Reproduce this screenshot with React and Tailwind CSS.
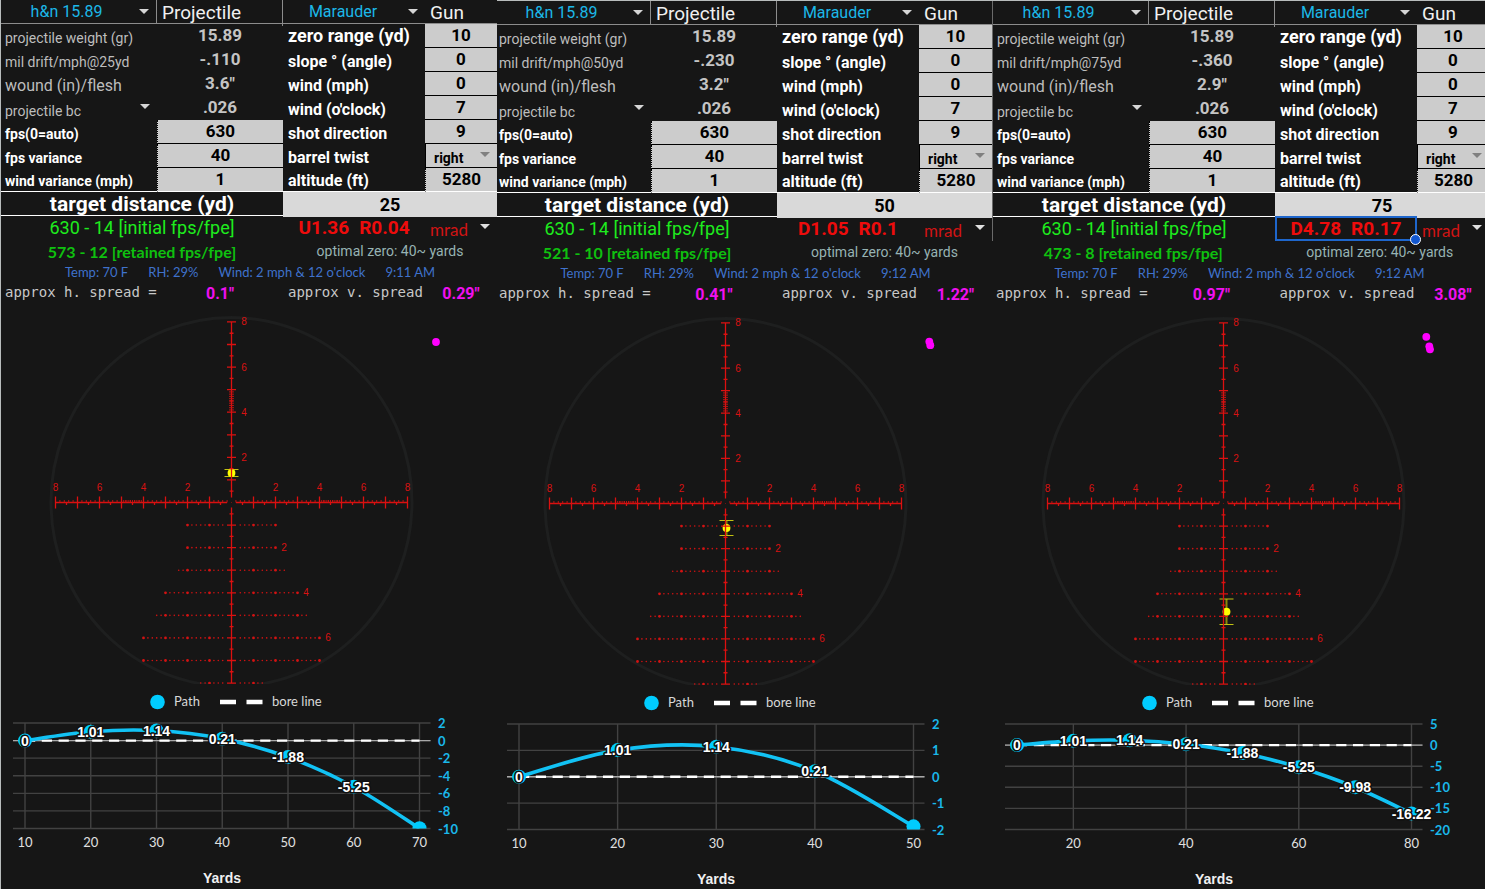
import React, { useId } from "react";

const PANELS = [
  {
    id: "d25",
    frame: "border-l border-[#b8bcbc]",
    table: "",
    cols: "grid-cols-[156fr_126fr_142fr_72fr]",
    half: "grid-cols-[282fr_214fr]",
    holdCols: "grid-cols-[142fr_72fr]",
    labelPad: "pl-1",
    fieldPad: "",
    arrowRight: "right-[7px]",
    viewX: 1,
    viewW: 496,
    distance: "25",
    drift: "-.110",
    wound: '3.6"',
    retained: "573 - 12 [retained fps/fpe]",
    holds: ["U1.36", "R0.04"],
    time: "9:11 AM",
    hSpread: '0.1"',
    vSpread: '0.29"',
    impact: { x: 231.5, y: 473, top: 469.5, bottom: 476.5 },
    hits: [[436, 342]],
    chart: { top: 2, bottom: -10, step: 2, xMax: 70, xTicks: [10, 20, 30, 40, 50, 60, 70], last: false },
  },
  {
    id: "d50",
    frame: "border-t border-[#b8bcbc]",
    table: "",
    cols: "grid-cols-[154fr_126fr_142fr_73fr]",
    half: "grid-cols-[280fr_215fr]",
    holdCols: "grid-cols-[142fr_73fr]",
    labelPad: "pl-0.5",
    fieldPad: "",
    arrowRight: "right-[7px]",
    viewX: 3,
    viewW: 495,
    distance: "50",
    drift: "-.230",
    wound: '3.2"',
    retained: "521 - 10 [retained fps/fpe]",
    holds: ["D1.05", "R0.1"],
    time: "9:12 AM",
    hSpread: '0.41"',
    vSpread: '1.22"',
    impact: { x: 232.5, y: 527, top: 519.5, bottom: 534.5 },
    hits: [[435.3, 340.6], [436.3, 344.2]],
    chart: { top: 2, bottom: -2, step: 1, xMax: 50, xTicks: [10, 20, 30, 40, 50], last: false },
  },
  {
    id: "d75",
    frame: "border-t border-[#b8bcbc]",
    table: "border-l border-[#6a6a6a]",
    cols: "grid-cols-[156fr_126fr_142fr_68fr]",
    half: "grid-cols-[282fr_210fr]",
    holdCols: "grid-cols-[142fr_68fr]",
    labelPad: "pl-1",
    fieldPad: "pl-1",
    arrowRight: "right-[3px]",
    viewX: 0,
    viewW: 493,
    distance: "75",
    drift: "-.360",
    wound: '2.9"',
    retained: "473 - 8 [retained fps/fpe]",
    holds: ["D4.78", "R0.17"],
    selected: true,
    time: "9:12 AM",
    hSpread: '0.97"',
    vSpread: '3.08"',
    impact: { x: 234.5, y: 610.7, top: 598, bottom: 623.5 },
    hits: [[434.3, 335.8], [437.3, 345.3], [438, 348.3]],
    chart: { top: 5, bottom: -20, step: 5, xMax: 80, xTicks: [20, 40, 60, 80], last: true },
  },
];

const PATH = [[10, 0], [20, 1.01], [30, 1.14], [40, 0.21], [50, -1.88], [60, -5.25], [70, -9.98], [80, -16.22]];

function Arrow({ className }) {
  return (
    <svg viewBox="0 0 10 5" aria-hidden="true" className={`pointer-events-none absolute h-[5px] w-2.5 ${className}`}>
      <path d="M0 0H10L5 5Z" fill="currentColor" />
    </svg>
  );
}

function Picker({ label, value, selectClass, arrowClass, cellClass = "" }) {
  return (
    <div className={`relative min-w-0 ${cellClass}`}>
      <select aria-label={label} className={`block h-full w-full appearance-none bg-transparent outline-none ${selectClass}`}>
        <option>{value}</option>
      </select>
      <Arrow className={arrowClass} />
    </div>
  );
}

const LABEL_SIZE = {
  sm: "text-[14px] leading-[20px]",
  md: "text-[16px] leading-[20px]",
  lg: "text-[18px] leading-[24px]",
};

function Label({ htmlFor, size = "md", muted, pad, children, line = "" }) {
  const Tag = htmlFor ? "label" : "span";
  return (
    <div className={`flex h-6 min-w-0 items-end whitespace-nowrap ${pad} ${line}`}>
      <Tag htmlFor={htmlFor} className={`${LABEL_SIZE[size]} ${muted ? "text-[#bdbdbd]" : "font-bold text-white"}`}>
        {children}
      </Tag>
    </div>
  );
}

function Field({ id, value, line = "border-b-black", side = "" }) {
  return (
    <input
      id={id}
      defaultValue={value}
      className={`block h-6 w-full min-w-0 border-b bg-[#cccccc] text-center text-[17px] font-bold text-black outline-none ${line} ${side}`}
    />
  );
}

function Reading({ children }) {
  return <output className="block h-6 text-center text-[17px] leading-[23px] font-bold text-[#c4c4c4]">{children}</output>;
}

function Reticle({ viewX, viewW, impact, hits }) {
  const cx = 231.5;
  const cy = 502.5;
  const ux = 22;
  const uy = 22.57;
  const X = (m) => cx + m * ux;
  const Y = (m) => cy - m * uy;
  const lines = [];
  const add = (x1, y1, x2, y2) => lines.push(`M${x1.toFixed(2)} ${y1.toFixed(2)}L${x2.toFixed(2)} ${y2.toFixed(2)}`);
  add(cx, Y(8), cx, cy - 5);
  add(cx, cy + 5, cx, Y(-8));
  for (let i = 1; i <= 8; i++) {
    for (const s of [-1, 1]) {
      add(cx - 4.5, Y(s * i), cx + 4.5, Y(s * i));
      add(cx - 2, Y(s * (i - 0.5)), cx + 2, Y(s * (i - 0.5)));
      add(X(s * i), cy - 6, X(s * i), cy + 6);
      add(X(s * (i - 0.5)), cy, X(s * (i - 0.5)), cy + 2.5);
    }
  }
  for (const s of [-1, 1]) add(cx + s * 4.5, cy, X(s * 8), cy);
  const fine = [];
  for (let i = 41; i < 50; i++) {
    fine.push(`M${cx - 2.5} ${Y(i / 10).toFixed(2)}h5`);
    for (const s of [-1, 1]) fine.push(`M${X((s * i) / 10).toFixed(2)} ${cy}v-2.5`);
  }
  for (let i = 1; i < 40; i++) {
    if (i % 5) for (const s of [-1, 1]) fine.push(`M${X(s * i * 0.2).toFixed(2)} ${cy}v-2.5`);
  }
  const rows = [2, 2, 2.4, 3, 3.4, 4, 4, 1.4];
  const dots = [];
  rows.forEach((w, r) => {
    for (let k = 2; k <= Math.round(w * 5); k++) {
      for (const s of [-1, 1]) dots.push({ x: X(s * k * 0.2), y: Y(-(r + 1)), big: k % 5 === 0 });
    }
  });
  return (
    <svg viewBox={`${viewX} 304 ${viewW} 386`} role="img" aria-label="Scope reticle with predicted impact" className="block h-auto w-full">
      <clipPath id={`scope${viewX}`}>
        <rect x="0" y="304" width="500" height="380" />
      </clipPath>
      <g clipPath={`url(#scope${viewX})`}>
        <ellipse cx={cx} cy="502" rx="180.5" ry="184.5" fill="none" stroke="#1e1f1f" strokeWidth="3" />
        <path d={`M${impact.x} ${impact.top}V${impact.bottom}`} stroke="#8a8a08" strokeWidth="2" />
        <path d={`M${impact.x - 7} ${impact.top}h14M${impact.x - 7} ${impact.bottom}h14`} stroke="#c2c212" strokeWidth="1.2" />
        <circle cx={impact.x} cy={impact.y} r="3.9" fill="#ffff00" />
        <path d={lines.join("")} stroke="#dc1010" strokeWidth="1.3" fill="none" />
        <path d={fine.join("")} stroke="#cc1212" strokeWidth="0.9" fill="none" />
        {dots.map((d, i) => (
          <circle key={i} cx={d.x} cy={d.y} r={d.big ? 1.4 : 0.8} fill="#d41212" />
        ))}
        <circle cx={cx} cy={cy} r="0.6" fill="#801010" />
      </g>
      <g fill="#d81212" fontFamily="'Liberation Sans', sans-serif" fontSize="10" textAnchor="middle">
        {[8, 6, 4, 2].map((n) => (
          <React.Fragment key={n}>
            <text x={X(-n)} y="491">{n}</text>
            <text x={X(n)} y="491">{n}</text>
            <text x="244" y={Y(n) + 3.5}>{n}</text>
          </React.Fragment>
        ))}
        <text x="284" y={Y(-2) + 3.5}>2</text>
        <text x="306" y={Y(-4) + 3.5}>4</text>
        <text x="328" y={Y(-6) + 3.5}>6</text>
      </g>
      {hits.map(([x, y]) => (
        <circle key={y} cx={x} cy={y} r="3.9" fill="#ff00ff" />
      ))}
    </svg>
  );
}

function PathChart({ viewX, viewW, chart }) {
  const { top, bottom, step, xMax, xTicks, last } = chart;
  const X = (v) => 25 + ((v - 10) / (xMax - 10)) * 394.5;
  const Y = (v) => 723 + ((top - v) / (top - bottom)) * 105.5;
  const data = PATH.filter(([d]) => d <= xMax);
  const pts = data.map(([d, v]) => [X(d), Y(v)]);
  let d = `M${pts[0]}`;
  for (let i = 0; i < pts.length - 1; i++) {
    const p0 = pts[i - 1] || pts[i];
    const p1 = pts[i];
    const p2 = pts[i + 1];
    const p3 = pts[i + 2] || p2;
    d += `C${p1[0] + (p2[0] - p0[0]) / 6} ${p1[1] + (p2[1] - p0[1]) / 6} ${p2[0] - (p3[0] - p1[0]) / 6} ${p2[1] - (p3[1] - p1[1]) / 6} ${p2}`;
  }
  const yTicks = [];
  for (let v = top; v >= bottom; v -= step) yTicks.push(v);
  const labelled = last ? data : data.slice(0, -1);
  return (
    <svg viewBox={`${viewX} 690 ${viewW} 198`} role="img" aria-label="Projectile path in inches by yards" className="block h-auto w-full">
      <g fill="#d8d8d8" fontFamily="Lato, 'Open Sans', sans-serif" fontSize="13">
        <circle cx="157.5" cy="702" r="7.3" fill="#00ccff" />
        <text x="174" y="706">Path</text>
        <path d="M220 702h16M246.500 702h16" stroke="#fff" strokeWidth="4.500" />
        <text x="272" y="706">bore line</text>
      </g>
      <g stroke="#424242" strokeWidth="1.4">
        {yTicks.map((v) => <path key={v} d={`M13 ${Y(v)}H430.500`} />)}
        {xTicks.map((v) => <path key={v} d={`M${X(v)} 723V828.500`} />)}
      </g>
      <path d={`M13 ${Y(0)}H430.500`} stroke="#a8a8a8" strokeWidth="1.3" />
      <clipPath id={`plot${xMax}`}>
        <rect x="5" y="715" width="435" height="113.500" />
      </clipPath>
      <path d={`M25 ${Y(0)}H419.500`} stroke="#fff" strokeWidth="2.4" strokeDasharray="10.2 6.600" />
      <g clipPath={`url(#plot${xMax})`}>
        <path d={d} fill="none" stroke="#12c2f4" strokeWidth="3.6" />
        {pts.map(([x, y]) => <circle key={x} cx={x} cy={y} r="7" fill="#00ccff" />)}
      </g>
      <g fill="#1ab8ea" fontFamily="Lato, 'Open Sans', sans-serif" fontSize="13" fontWeight="700">
        {yTicks.map((v) => <text key={v} x="438" y={Y(v) + 5}>{v}</text>)}
      </g>
      <g fill="#fff" stroke="#101010" strokeWidth="3" paintOrder="stroke" strokeLinejoin="round" fontFamily="'Liberation Sans', sans-serif" fontSize="14" fontWeight="700" textAnchor="middle">
        {labelled.map(([x, v]) => <text key={x} x={X(x)} y={Y(v) + 5}>{v}</text>)}
      </g>
      <g fill="#e0e0e0" fontFamily="Lato, 'Open Sans', sans-serif" fontSize="13" textAnchor="middle">
        {xTicks.map((v) => <text key={v} x={X(v)} y="847">{v}</text>)}
      </g>
      <text x="222" y="883" fill="#f0f0f0" fontFamily="'Liberation Sans', sans-serif" fontSize="14" fontWeight="700" textAnchor="middle">Yards</text>
    </svg>
  );
}

function Panel({ p }) {
  const uid = useId();
  const id = (k) => `${uid}-${k}`;
  const left = p.labelPad;
  const dotted = "border-l border-l-black [border-left-style:dotted]";
  return (
    <section aria-label={`Target at ${p.distance} yards`} className={`min-w-0 ${p.frame}`}>
      <div className={p.table}>
        <div className={`grid h-6 border-b border-[#8c8c8c] ${p.cols}`}>
          <Picker label="Projectile" value="h&n 15.89" cellClass="h-[23px] border-r border-[#8c8c8c]" selectClass="pr-6 text-center text-[16px] leading-[22px] text-[#1cb8e8]" arrowClass="top-[9px] right-[7px] text-[#d6d6d6]" />
          <h2 className="border-r border-[#8c8c8c] pl-[5px] text-[19px] leading-[26px] text-[#f0f0f0]">Projectile</h2>
          <Picker label="Gun" value="Marauder" cellClass="h-[23px]" selectClass="pr-[22px] text-center text-[16px] leading-[22px] text-[#1cb8e8]" arrowClass="top-[9px] right-[7px] text-[#d6d6d6]" />
          <h2 className="pl-[5px] text-[19px] leading-[26px] text-[#f0f0f0]">Gun</h2>
        </div>
        <div className={`grid ${p.cols}`}>
          <Label size="sm" muted pad={left}>projectile weight (gr)</Label>
          <Reading>15.89</Reading>
          <Label htmlFor={id("zero")} size="lg" pad="pl-[5px]">zero range (yd)</Label>
          <Field id={id("zero")} value="10" side={p.fieldPad} />

          <Label size="sm" muted pad={left}>mil drift/mph@{p.distance}yd</Label>
          <Reading>{p.drift}</Reading>
          <Label htmlFor={id("slope")} pad="pl-[5px]">slope ° (angle)</Label>
          <Field id={id("slope")} value="0" side={p.fieldPad} />

          <Label muted pad={left}>wound (in)/flesh</Label>
          <Reading>{p.wound}</Reading>
          <Label htmlFor={id("wind")} pad="pl-[5px]">wind (mph)</Label>
          <Field id={id("wind")} value="0" side={p.fieldPad} />

          <Picker label="Ballistic coefficient" value="projectile bc" cellClass="h-6" selectClass={`pt-[5px] text-[14px] leading-[18px] text-[#bdbdbd] ${left}`} arrowClass="top-2 right-[7px] text-[#d6d6d6]" />
          <Reading>.026</Reading>
          <Label htmlFor={id("clock")} pad="pl-[5px]">wind (o'clock)</Label>
          <Field id={id("clock")} value="7" side={p.fieldPad} />

          <Label htmlFor={id("fps")} size="sm" pad={left}>fps(0=auto)</Label>
          <Field id={id("fps")} value="630" side={dotted} />
          <Label htmlFor={id("dir")} pad="pl-[5px]">shot direction</Label>
          <Field id={id("dir")} value="9" side={p.fieldPad} />

          <Label htmlFor={id("fpsvar")} size="sm" pad={left}>fps variance</Label>
          <Field id={id("fpsvar")} value="40" side={dotted} />
          <Label pad="pl-[5px]">barrel twist</Label>
          <Picker label="barrel twist" value="right" cellClass="h-6 border-b border-l border-black bg-[#cccccc]" selectClass="pt-1 pl-2 text-[14px] leading-[18px] font-bold text-black" arrowClass={`top-2 text-[#808080] ${p.arrowRight}`} />

          <Label htmlFor={id("windvar")} size="sm" pad={left} line="border-b border-b-white">wind variance (mph)</Label>
          <Field id={id("windvar")} value="1" side={dotted} line="border-b-white" />
          <Label htmlFor={id("alt")} pad="pl-[5px]" line="border-b border-b-white">altitude (ft)</Label>
          <Field id={id("alt")} value="5280" side={`${dotted} ${p.fieldPad}`} line="border-b-white" />
        </div>
        <div className={`grid h-6 border-b border-white ${p.half}`}>
          <label htmlFor={id("dist")} className="text-center text-[21px] leading-[25px] font-bold whitespace-nowrap text-white">target distance (yd)</label>
          <input id={id("dist")} defaultValue={p.distance} className={`block h-full w-full min-w-0 bg-[#d9d9d9] text-center text-[18px] font-bold text-black outline-none ${p.fieldPad}`} />
        </div>
        <div className={`grid h-6 ${p.half}`}>
          <p className="text-center text-[18px] leading-[24px] whitespace-nowrap text-[#1eec1e]">630 - 14 [initial fps/fpe]</p>
          <div className={`grid h-6 ${p.holdCols}`}>
            <p className="relative flex h-6 justify-center gap-2.5 text-[19px] leading-[23px] font-bold text-[#ee0c0c]">
              <span>{p.holds[0]}</span>
              <span>{p.holds[1]}</span>
              {p.selected && (
                <span className="absolute inset-x-0 -top-px bottom-0 border-2 border-[#1e66cc]">
                  <span className="absolute -right-1.5 -bottom-1.5 size-[11px] rounded-full border border-white bg-[#1257d0]" />
                </span>
              )}
            </p>
            <Picker label="Angle unit" value="mrad" cellClass="h-6" selectClass="pt-1 pl-[5px] font-[Lato] text-[17px] leading-[20px] text-[#d01414]" arrowClass={`top-2 text-[#e0e0e0] ${p.arrowRight}`} />
          </div>
        </div>
      </div>
      <div className={`grid h-6 ${p.half}`}>
        <p className="text-center font-[Lato] text-[16px] leading-[24px] font-bold whitespace-nowrap text-[#0fc00f]">{p.retained}</p>
        <p className="text-center text-[14px] leading-[22px] whitespace-nowrap text-[#97b3b3]">optimal zero: 40~ yards</p>
      </div>
      <p className="flex h-5 justify-center gap-5 pl-0.5 font-[Lato] text-[13px] leading-[17px] whitespace-nowrap text-[#3f72cc]">
        <span>Temp: 70 F</span>
        <span>RH: 29%</span>
        <span>Wind: 2 mph &amp; 12 o'clock</span>
        <span>{p.time}</span>
      </p>
      <div className={`grid h-5 ${p.cols}`}>
        <span className={`font-['DejaVu_Sans_Mono'] text-[14px] leading-[17px] whitespace-nowrap text-[#c8c8c8] ${left}`}>approx h. spread =</span>
        <span className="text-center text-[16px] leading-[19px] font-bold text-[#f010f0]">{p.hSpread}</span>
        <span className="pl-[5px] font-['DejaVu_Sans_Mono'] text-[14px] leading-[17px] whitespace-nowrap text-[#c8c8c8]">approx v. spread</span>
        <span className={`text-center text-[16px] leading-[19px] font-bold text-[#f010f0] ${p.fieldPad}`}>{p.vSpread}</span>
      </div>
      <Reticle viewX={p.viewX} viewW={p.viewW} impact={p.impact} hits={p.hits} />
      <PathChart viewX={p.viewX} viewW={p.viewW} chart={p.chart} />
    </section>
  );
}

export default function App() {
  return (
    <main className="grid min-h-screen grid-cols-[497fr_495fr_493fr] overflow-x-hidden bg-[#161616] font-[Roboto]">
      {PANELS.map((p) => (
        <Panel key={p.id} p={p} />
      ))}
    </main>
  );
}
